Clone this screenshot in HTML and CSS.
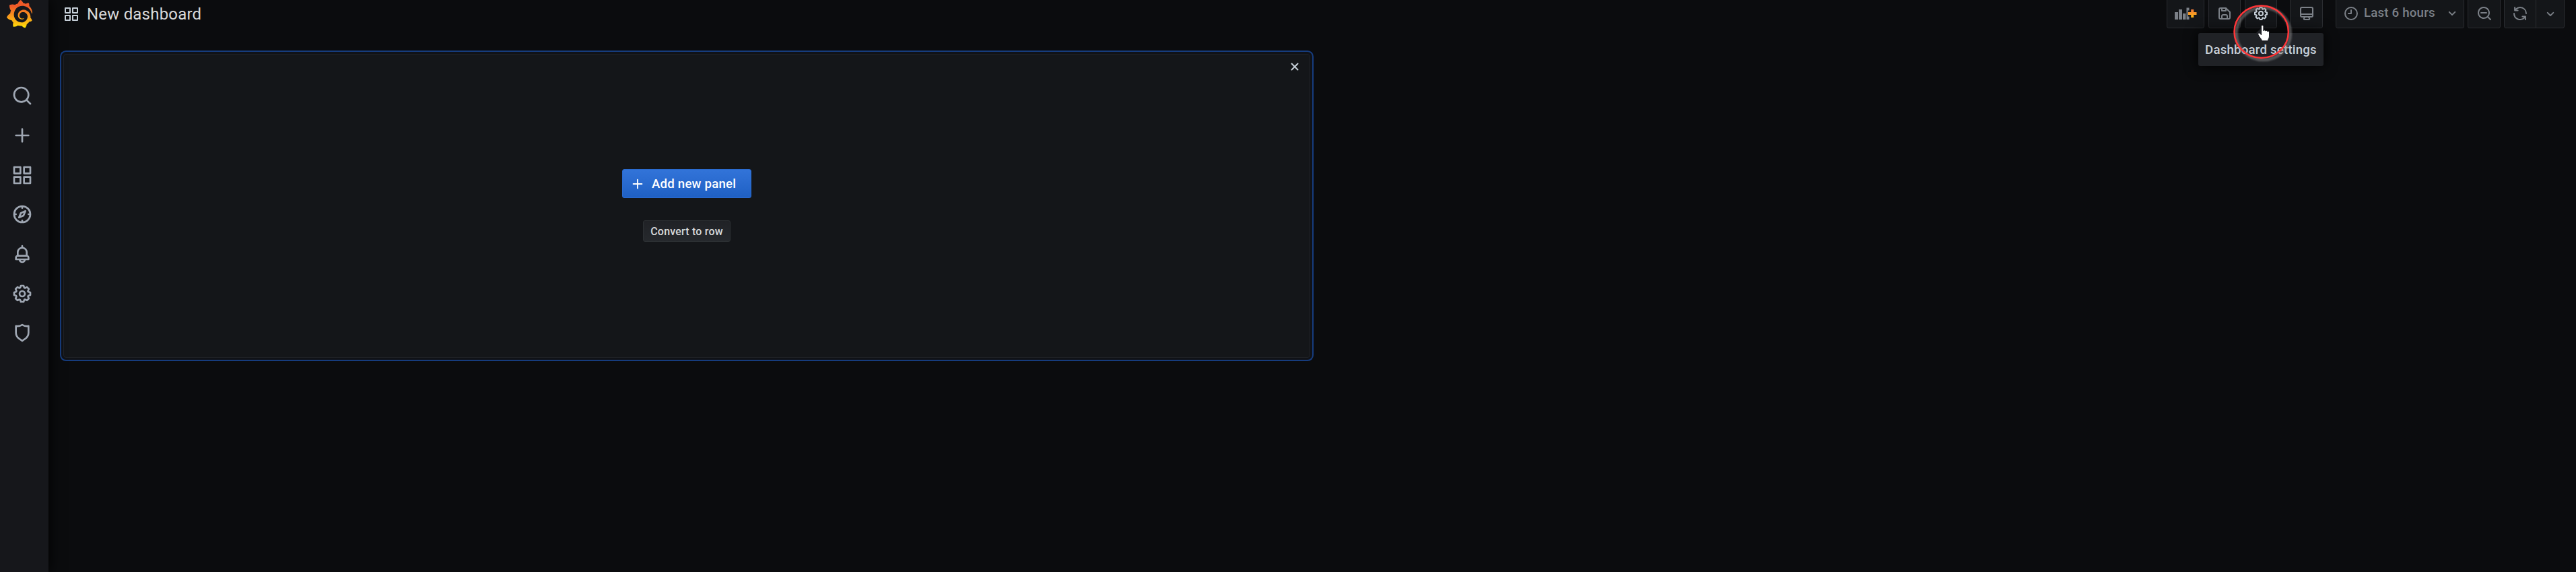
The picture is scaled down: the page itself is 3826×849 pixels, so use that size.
FILE: index.html
```
<!DOCTYPE html>
<html lang="en">
<head>
<meta charset="utf-8">
<title>New dashboard</title>
<link rel="stylesheet" href="styles.css">
</head>
<body>
<svg class="sprite" aria-hidden="true">
  <symbol id="apps" viewBox="0 0 24 24"><path d="M10,13H3a1,1,0,0,0-1,1v7a1,1,0,0,0,1,1h7a1,1,0,0,0,1-1V14A1,1,0,0,0,10,13ZM9,20H4V15H9ZM21,2H14a1,1,0,0,0-1,1v7a1,1,0,0,0,1,1h7a1,1,0,0,0,1-1V3A1,1,0,0,0,21,2ZM20,9H15V4h5Zm1,4H14a1,1,0,0,0-1,1v7a1,1,0,0,0,1,1h7a1,1,0,0,0,1-1V14A1,1,0,0,0,21,13Zm-1,7H15V15h5ZM10,2H3A1,1,0,0,0,2,3v7a1,1,0,0,0,1,1h7a1,1,0,0,0,1-1V3A1,1,0,0,0,10,2ZM9,9H4V4H9Z"/></symbol>
  <symbol id="search" viewBox="0 0 24 24"><path d="M21.71,20.29,18,16.61A9,9,0,1,0,16.61,18l3.68,3.68a1,1,0,0,0,1.42,0A1,1,0,0,0,21.71,20.29ZM11,18a7,7,0,1,1,7-7A7,7,0,0,1,11,18Z"/></symbol>
  <symbol id="search-minus" viewBox="0 0 24 24"><path d="M21.71,20.29,18,16.61A9,9,0,1,0,16.61,18l3.68,3.68a1,1,0,0,0,1.42,0A1,1,0,0,0,21.71,20.29ZM11,18a7,7,0,1,1,7-7A7,7,0,0,1,11,18ZM15,10H7a1,1,0,0,0,0,2h8a1,1,0,0,0,0-2Z"/></symbol>
  <symbol id="plus" viewBox="0 0 24 24"><path d="M19,11H13V5a1,1,0,0,0-2,0v6H5a1,1,0,0,0,0,2h6v6a1,1,0,0,0,2,0V13h6a1,1,0,0,0,0-2Z"/></symbol>
  <symbol id="compass" viewBox="0 0 24 24"><path d="M12,2A10,10,0,1,0,22,12,10,10,0,0,0,12,2Zm1,17.93V19a1,1,0,0,0-2,0v.93A8,8,0,0,1,4.070,13H5a1,1,0,0,0,0-2H4.070A8,8,0,0,1,11,4.070V5a1,1,0,0,0,2,0V4.070A8,8,0,0,1,19.930,11H19a1,1,0,0,0,0,2h.93A8,8,0,0,1,13,19.930ZM15.140,7.550l-5,2.120a1,1,0,0,0-.52.52l-2.120,5a1,1,0,0,0,.21,1.100,1,1,0,0,0,.7.29.93.93,0,0,0,.4-.08l5-2.120a1,1,0,0,0,.52-.52l2.120-5a1,1,0,0,0-1.310-1.310Zm-2.490,5.100-2.280,1,1-2.280,2.280-1Z"/></symbol>
  <symbol id="bell" viewBox="0 0 24 24"><path d="M18,13.18V10a6,6,0,0,0-5-5.910V3a1,1,0,0,0-2,0V4.090A6,6,0,0,0,6,10v3.180A3,3,0,0,0,4,16v2a1,1,0,0,0,1,1H8.140a4,4,0,0,0,7.720,0H19a1,1,0,0,0,1-1V16A3,3,0,0,0,18,13.180ZM8,10a4,4,0,0,1,8,0v3H8Zm4,10a2,2,0,0,1-1.720-1h3.440A2,2,0,0,1,12,20Zm6-3H6V16a1,1,0,0,1,1-1H17a1,1,0,0,1,1,1Z"/></symbol>
  <symbol id="cog" viewBox="0 0 24 24"><path d="M21.32,9.55l-1.89-.63.89-1.78A1,1,0,0,0,20.13,6L18,3.87a1,1,0,0,0-1.15-.19l-1.78.89-.63-1.89A1,1,0,0,0,13.5,2h-3a1,1,0,0,0-.95.68L8.92,4.57,7.14,3.68A1,1,0,0,0,6,3.87L3.87,6a1,1,0,0,0-.19,1.15l.89,1.78-1.89.63A1,1,0,0,0,2,10.5v3a1,1,0,0,0,.68.95l1.89.63-.89,1.78A1,1,0,0,0,3.87,18L6,20.13a1,1,0,0,0,1.15.19l1.78-.89.63,1.89a1,1,0,0,0,.95.68h3a1,1,0,0,0,.95-.68l.63-1.89,1.78.89A1,1,0,0,0,18,20.13L20.13,18a1,1,0,0,0,.19-1.15l-.89-1.78,1.89-.63A1,1,0,0,0,22,13.5v-3A1,1,0,0,0,21.32,9.55ZM20,12.78l-1.2.4A2,2,0,0,0,17.64,16l.57,1.14-1.1,1.1L16,17.64a2,2,0,0,0-2.79,1.16l-.4,1.2H11.22l-.4-1.2A2,2,0,0,0,8,17.64l-1.14.57-1.1-1.1L6.36,16A2,2,0,0,0,5.2,13.18L4,12.78V11.22l1.2-.4A2,2,0,0,0,6.36,8L5.79,6.89l1.1-1.1L8,6.36A2,2,0,0,0,10.82,5.2l.4-1.2h1.56l.4,1.2A2,2,0,0,0,16,6.36l1.14-.57,1.1,1.1L17.64,8a2,2,0,0,0,1.16,2.79l1.2.4ZM12,8a4,4,0,1,0,4,4A4,4,0,0,0,12,8Zm0,6a2,2,0,1,1,2-2A2,2,0,0,1,12,14Z"/></symbol>
  <symbol id="shield" viewBox="0 0 24 24"><path d="M19.63,3.65a1,1,0,0,0-.84-.2,8,8,0,0,1-6.22-1.27,1,1,0,0,0-1.14,0A8,8,0,0,1,5.21,3.45a1,1,0,0,0-.84.2A1,1,0,0,0,4,4.43v7.45a9,9,0,0,0,3.77,7.33l3.65,2.6a1,1,0,0,0,1.16,0l3.65-2.6A9,9,0,0,0,20,11.88V4.43A1,1,0,0,0,19.63,3.65ZM18,11.88a7,7,0,0,1-2.93,5.7L12,19.77,8.93,17.58A7,7,0,0,1,6,11.88V5.58a10,10,0,0,0,6-1.39,10,10,0,0,0,6,1.39Z"/></symbol>
  <symbol id="save" viewBox="0 0 24 24"><path d="M20.71,9.29l-6-6a1,1,0,0,0-.32-.21A1.09,1.09,0,0,0,14,3H6A3,3,0,0,0,3,6V18a3,3,0,0,0,3,3H18a3,3,0,0,0,3-3V10A1,1,0,0,0,20.71,9.29ZM9,5h4V7H9Zm6,14H9V16a1,1,0,0,1,1-1h4a1,1,0,0,1,1,1Zm4-1a1,1,0,0,1-1,1H17V16a3,3,0,0,0-3-3H10a3,3,0,0,0-3,3v3H6a1,1,0,0,1-1-1V6A1,1,0,0,1,6,5H7V8A1,1,0,0,0,8,9h6a1,1,0,0,0,1-1V6.41l4,4Z"/></symbol>
  <symbol id="monitor" viewBox="0 0 24 24"><path d="M19,2H5A3,3,0,0,0,2,5v10a3,3,0,0,0,3,3H7.64l-.58,1a2,2,0,0,0,0,2,2,2,0,0,0,1.75,1h6.46A2,2,0,0,0,17,21a2,2,0,0,0,0-2l-.59-1H19a3,3,0,0,0,3-3V5A3,3,0,0,0,19,2ZM8.77,20,10,18H14l1.2,2ZM20,15a1,1,0,0,1-1,1H5a1,1,0,0,1-1-1V14H20Zm0-3H4V5A1,1,0,0,1,5,4H19a1,1,0,0,1,1,1Z"/></symbol>
  <symbol id="clock" viewBox="0 0 24 24"><path d="M12,6a1,1,0,0,0-1,1v4H8a1,1,0,0,0,0,2h4a1,1,0,0,0,1-1V7A1,1,0,0,0,12,6Zm0-4A10,10,0,1,0,22,12,10,10,0,0,0,12,2Zm0,18a8,8,0,1,1,8-8A8,8,0,0,1,12,20Z"/></symbol>
  <symbol id="sync" viewBox="0 0 24 24"><path d="M19.91,15.51H15.38a1,1,0,0,0,0,2h2.4A8,8,0,0,1,4,12a1,1,0,1,0-2,0,10,10,0,0,0,16.88,7.23V21a1,1,0,0,0,2,0V16.5A1,1,0,0,0,19.91,15.51ZM12,2A10,10,0,0,0,5.12,4.77V3a1,1,0,0,0-2,0V7.5a1,1,0,0,0,1,1h4.5a1,1,0,0,0,0-2H6.22A8,8,0,0,1,20,12a1,1,0,0,0,2,0A10,10,0,0,0,12,2Z"/></symbol>
  <symbol id="angle-down" viewBox="0 0 24 24"><path d="M17,9.17a1,1,0,0,0-1.41,0L12,12.71,8.46,9.17a1,1,0,0,0-1.41,0,1,1,0,0,0,0,1.42l4.24,4.24a1,1,0,0,0,1.42,0L17,10.59A1,1,0,0,0,17,9.17Z"/></symbol>
</svg>

<div class="app">
  <nav class="sidebar">
    <svg class="logo" viewBox="0 0 351 365">
      <defs><linearGradient id="sun" x1="0" y1="1" x2="0" y2="0"><stop offset="0" stop-color="#fff200"/><stop offset=".12" stop-color="#fcc80f"/><stop offset=".45" stop-color="#f7941d"/><stop offset=".78" stop-color="#f05a28"/><stop offset="1" stop-color="#f05a28"/></linearGradient></defs>
      <path fill="url(#sun)" d="M342,161.2c-0.6-6.1-1.6-13.1-3.6-20.9c-2-7.7-5-16.2-9.4-25c-4.4-8.8-10.1-17.9-17.5-26.8c-2.9-3.5-6.1-6.9-9.5-10.2c5.1-20.3-6.2-37.9-6.2-37.9c-19.5-1.2-31.9,6.1-36.5,9.4c-0.8-0.3-1.5-0.7-2.3-1c-3.3-1.3-6.7-2.6-10.3-3.7c-3.5-1.1-7.1-2.1-10.8-3c-3.7-0.9-7.4-1.6-11.2-2.2c-0.7-0.1-1.3-0.2-2-0.3c-8.5-27.2-32.9-38.6-32.9-38.6c-27.3,17.3-32.4,41.5-32.4,41.5s-0.1,0.5-0.3,1.4c-1.5,0.4-3,0.9-4.5,1.3c-2.1,0.6-4.2,1.4-6.2,2.2c-2.1,0.8-4.1,1.6-6.2,2.5c-4.1,1.8-8.2,3.8-12.2,6c-3.9,2.2-7.7,4.6-11.4,7.1c-0.5-0.2-1-0.4-1-0.4c-37.8-14.4-71.3,2.9-71.3,2.9c-3.1,40.2,15.1,65.5,18.7,70.1c-0.9,2.5-1.7,5-2.5,7.5c-2.8,9.1-4.9,18.4-6.2,28.1c-0.2,1.4-0.4,2.8-0.5,4.2C18.8,192.7,8.5,228,8.5,228c29.1,33.5,63.1,35.6,63.1,35.6c0,0,0.1-0.1,0.1-0.1c4.3,7.7,9.3,15,14.9,21.9c2.4,2.9,4.8,5.6,7.4,8.3c-10.6,30.4,1.5,55.6,1.5,55.6c32.4,1.2,53.7-14.2,58.2-17.7c3.2,1.1,6.5,2.1,9.8,2.9c10,2.6,20.2,4.1,30.4,4.5c2.5,0.1,5.1,0.2,7.6,0.1l1.2,0l0.8,0l1.6,0l1.6-0.1l0,0.1c15.3,21.8,42.1,24.9,42.1,24.9c19.1-20.1,20.2-40.1,20.2-44.4l0,0c0,0,0-0.1,0-0.3c0-0.4,0-0.6,0-0.6l0,0c0-0.3,0-0.6,0-0.9c4-2.8,7.8-5.8,11.4-9.1c7.6-6.9,14.3-14.8,19.9-23.3c0.5-0.8,1-1.6,1.5-2.4c21.6,1.2,36.9-13.4,36.9-13.4c-3.6-22.5-16.4-33.5-19.1-35.6l0,0c0,0-0.1-0.1-0.3-0.2c-0.2-0.1-0.2-0.2-0.2-0.2c0,0,0,0,0,0c-0.1-0.1-0.3-0.2-0.5-0.3c0.1-1.4,0.2-2.7,0.3-4.1c0.2-2.4,0.2-4.9,0.2-7.3l0-1.8l0-0.9l0-0.5c0-0.6,0-0.4,0-0.6l-0.1-1.5l-0.1-2c0-0.7-0.1-1.3-0.2-1.9c-0.1-0.6-0.1-1.3-0.2-1.9l-0.2-1.9l-0.3-1.9c-0.4-2.5-0.8-4.9-1.4-7.4c-2.3-9.7-6.1-18.9-11-27.2c-5-8.3-11.2-15.6-18.3-21.8c-7-6.2-14.9-11.2-23.1-14.9c-8.3-3.7-16.9-6.1-25.5-7.2c-4.3-0.6-8.6-0.8-12.9-0.7l-1.6,0l-0.4,0c-0.1,0-0.6,0-0.5,0l-0.7,0l-1.6,0.1c-0.6,0-1.2,0.1-1.7,0.1c-2.2,0.2-4.4,0.5-6.5,0.9c-8.6,1.6-16.7,4.7-23.8,9c-7.1,4.3-13.3,9.6-18.3,15.6c-5,6-8.9,12.7-11.6,19.6c-2.7,6.9-4.2,14.1-4.6,21c-0.1,1.7-0.1,3.5-0.1,5.2c0,0.4,0,0.9,0,1.3l0.1,1.4c0.1,0.8,0.1,1.7,0.2,2.5c0.3,3.5,1,6.9,1.9,10.1c1.9,6.5,4.9,12.4,8.6,17.4c3.7,5,8.2,9.1,12.9,12.4c4.7,3.2,9.8,5.5,14.8,7c5,1.5,10,2.1,14.7,2.1c0.6,0,1.2,0,1.7,0c0.3,0,0.6,0,0.9,0c0.3,0,0.6,0,0.9-0.1c0.5,0,1-0.1,1.5-0.1c0.1,0,0.3,0,0.4-0.1l0.5-0.1c0.3,0,0.6-0.1,0.9-0.1c0.6-0.1,1.1-0.2,1.7-0.3c0.6-0.1,1.1-0.2,1.6-0.4c1.1-0.2,2.1-0.6,3.1-0.9c2-0.7,4-1.5,5.7-2.4c1.8-0.9,3.4-2,5-3c0.4-0.3,0.9-0.6,1.3-1c1.6-1.3,1.9-3.7,0.6-5.3c-1.1-1.4-3.1-1.8-4.7-0.9c-0.4,0.2-0.8,0.4-1.2,0.6c-1.4,0.7-2.8,1.3-4.3,1.8c-1.5,0.5-3.1,0.9-4.7,1.2c-0.8,0.1-1.6,0.2-2.5,0.3c-0.4,0-0.8,0.1-1.3,0.1c-0.4,0-0.9,0-1.2,0c-0.4,0-0.8,0-1.2,0c-0.5,0-1,0-1.5-0.1c-0.5,0-0.9-0.1-1.3-0.1c-0.5-0.1-0.9-0.1-1.4-0.2c-3.7-0.5-7.4-1.6-10.9-3.2c-3.6-1.6-7-3.8-10.1-6.6c-3.1-2.8-5.8-6.1-7.9-9.9c-2.1-3.8-3.6-8-4.3-12.4c-0.3-2.2-0.5-4.5-0.4-6.7c0-0.6,0.1-1.2,0.1-1.8l0-0.8c0-0.3,0.1-0.6,0.1-0.9c0.1-1.2,0.3-2.4,0.5-3.6c1.7-9.6,6.5-19,13.9-26.1c1.9-1.8,3.9-3.4,6-4.9c2.1-1.5,4.4-2.8,6.8-3.9c2.4-1.1,4.8-2,7.4-2.7c2.5-0.7,5.1-1.1,7.8-1.4c1.3-0.1,2.6-0.2,4-0.2l2.7,0l1.5,0.1c2.9,0.2,5.7,0.6,8.5,1.3c5.6,1.2,11.1,3.3,16.2,6.1c10.2,5.7,18.9,14.5,24.2,25.1c2.7,5.3,4.6,11,5.5,16.9c0.2,1.5,0.4,3,0.5,4.5l0.2,2.2l0,4.3c0,0.7-0.1,1.9-0.1,2.6c-0.1,1.6-0.3,3.3-0.5,4.9c-0.2,1.6-0.5,3.2-0.8,4.8c-0.3,1.6-0.7,3.2-1.1,4.7c-0.8,3.1-1.8,6.2-3,9.3c-2.4,6-5.6,11.8-9.4,17.1c-7.7,10.6-18.2,19.2-30.2,24.7c-6,2.7-12.3,4.7-18.8,5.7c-3.2,0.6-6.5,0.9-9.8,1l-4.9,0c-1.8,0-3.5-0.1-5.3-0.3c-7-0.5-13.9-1.8-20.7-3.7c-6.7-1.9-13.2-4.6-19.4-7.8c-12.3-6.6-23.4-15.6-32-26.5c-4.3-5.4-8.1-11.3-11.2-17.4c-3.1-6.1-5.6-12.6-7.4-19.1c-1.8-6.6-2.9-13.3-3.4-20.1l-0.1-1.3l0-5.7c0-0.8,0-1.7,0-2.5c0.1-3.3,0.4-6.8,0.8-10.2c0.4-3.4,1-6.9,1.7-10.3c0.7-3.4,1.5-6.8,2.5-10.2c1.9-6.7,4.3-13.2,7.1-19.3c5.7-12.2,13.1-23.1,22-31.8c2.2-2.2,4.5-4.2,6.9-6.2c2.4-1.9,4.9-3.7,7.5-5.4c2.5-1.7,5.2-3.2,7.9-4.6c1.3-0.7,2.7-1.4,4.1-2c1.4-0.6,2.8-1.2,4.2-1.8c2.8-1.2,5.7-2.2,8.7-3.1c1.4-0.5,2.9-0.9,4.4-1.3c1.5-0.4,3-0.8,4.5-1.1c1.5-0.4,3-0.7,4.6-1c1.5-0.3,3-0.5,4.6-0.8c2-0.3,3.4-0.4,4.9-0.6c2-0.2,3.6-0.4,5.3-0.5c2-0.2,3.6-0.3,4.8-0.3c2.9-0.2,6.9-0.2,9.8-0.1c5.8,0.2,11.5,0.9,17,1.9c11.1,2.1,21.5,5.6,31,10.3c9.5,4.6,17.9,10.3,25.3,16.5c2.8,2.4,4.5,4,5.3,4.8c1.7,1.6,3.3,3.2,4.9,4.9c3.1,3.3,6,6.6,8.6,10c5.2,6.7,9.4,13.5,12.7,19.9c0.8,1.6,1.6,3.2,2.3,4.8c0.8,1.6,1.5,3.1,2.1,4.6c1.2,3,2.4,5.9,3.3,8.6c1.5,4.4,2.6,8.3,3.5,11.7c0.3,1.4,1.6,2.3,3,2.1c1.5-0.1,2.6-1.3,2.6-2.8C342.6,170.4,342.5,166.1,342,161.2z"/>
    </svg>
    <div class="menu">
      <a class="menu-item"><svg><use href="#search"/></svg></a>
      <a class="menu-item"><svg><use href="#plus"/></svg></a>
      <a class="menu-item"><svg><use href="#apps"/></svg></a>
      <a class="menu-item"><svg><use href="#compass"/></svg></a>
      <a class="menu-item"><svg><use href="#bell"/></svg></a>
      <a class="menu-item"><svg><use href="#cog"/></svg></a>
      <a class="menu-item"><svg><use href="#shield"/></svg></a>
    </div>
  </nav>

  <main class="main">
    <header class="navbar">
      <div class="title"><svg class="icon"><use href="#apps"/></svg><span>New dashboard</span></div>
      <div class="tools">
        <button class="tool add-panel">
          <svg class="bars" viewBox="0 0 34 24">
            <defs><linearGradient id="plusfill" x1="0" y1="0" x2="0" y2="1"><stop offset="0" stop-color="#f2793b"/><stop offset="1" stop-color="#fcb612"/></linearGradient></defs>
            <path fill="#7b8087" d="M1 10h5v11H1zM7 6h5v15H7zM13 12h4.500v9H13zM18.500 3.500h4v4h-2v9h2v4.500h-4z"/>
            <path fill="url(#plusfill)" d="M25.200 6h4v4h4.300v4h-4.300v4h-4v-4H21v-4h4.200z"/>
          </svg>
        </button>
        <button class="tool save"><svg class="icon"><use href="#save"/></svg></button>
        <div class="settings">
          <button class="tool active"><svg class="icon"><use href="#cog"/></svg></button>
          <div class="tooltip">Dashboard settings</div>
          <svg class="pointer" viewBox="0 0 96 96">
            <defs><filter id="soft" x="-20%" y="-20%" width="140%" height="140%"><feGaussianBlur stdDeviation="1.300"/></filter></defs>
            <ellipse cx="50.500" cy="50" rx="40.200" ry="38.700" fill="none" stroke="#8a8a8a" stroke-opacity=".5" stroke-width="5" filter="url(#soft)"/>
            <ellipse cx="47.700" cy="47.200" rx="40.200" ry="38.700" fill="none" stroke="#ff3538" stroke-width="2.500"/>
            <path fill="#fff" stroke="#15161c" stroke-width="1" d="M47.500 39.200c0-2.200 3.400-2.200 3.400 0v6.600c.5-1.500 2.900-1.300 3 .3.700-1.200 2.700-.8 2.800.6.800-1 2.800-.5 2.800 1.200v5.800c0 3.300-2 4.200-2 7h-9c-.3-2.700-3.600-4.900-5.500-9.300-1-2.400 1.400-3.200 2.800-1.500l1.700 1.900z"/>
          </svg>
        </div>
        <button class="tool monitor"><svg class="icon"><use href="#monitor"/></svg></button>
        <button class="tool time"><svg class="icon"><use href="#clock"/></svg><span>Last 6 hours</span><svg class="icon"><use href="#angle-down"/></svg></button>
        <button class="tool zoom"><svg class="icon"><use href="#search-minus"/></svg></button>
        <div class="refresh">
          <button class="tool sync"><svg class="icon"><use href="#sync"/></svg></button>
          <button class="tool interval"><svg class="icon"><use href="#angle-down"/></svg></button>
        </div>
      </div>
    </header>

    <section class="panel">
      <div class="panel-head"><svg class="close" viewBox="0 0 12 12"><path d="M1.500 1.500l9 9M10.500 1.500l-9 9"/></svg></div>
      <div class="panel-body">
        <button class="primary"><svg><use href="#plus"/></svg><span>Add new panel</span></button>
        <button class="secondary">Convert to row</button>
      </div>
    </section>
  </main>
</div>
</body>
</html>
```
FILE: styles.css
```
* { box-sizing: border-box; }

html, body { height: 100%; }

body {
  margin: 0;
  overflow: hidden;
  background: #0b0c0e;
  color: #c7d0d9;
  font-family: Roboto, "Liberation Sans", sans-serif;
  font-size: 18.67px;
  letter-spacing: .0107em;
}

button {
  margin: 0;
  padding: 0;
  font: inherit;
  letter-spacing: inherit;
  color: inherit;
}

svg { display: block; flex: none; fill: currentColor; }

.sprite { display: none; }
.icon { width: 24px; height: 24px; }

.app { display: flex; height: 849px; }

.sidebar {
  position: relative;
  flex: none;
  width: 72px;
  background: #16171b;
  box-shadow: 0 0 20px #000;
}

.logo { width: 40px; height: 41.500px; margin-left: 9px; }

.menu { padding-top: 71.500px; }

.menu-item {
  display: flex;
  align-items: center;
  height: 58.670px;
  padding-left: 17px;
  color: #9fa7b3;
}

.menu-item svg { width: 32px; height: 32px; }

.main { flex: 1; min-width: 0; }

.navbar {
  display: flex;
  justify-content: space-between;
  height: 80px;
  padding: 0 17px 0 22px;
}

.title {
  display: flex;
  align-items: center;
  gap: 11px;
  height: 42px;
  font-size: 24px;
  color: #d8d9da;
}

.title .icon { color: #c7d0d9; }

.tools { display: flex; margin-top: -6px; }

.tool {
  display: flex;
  align-items: center;
  justify-content: center;
  width: 48px;
  height: 48px;
  padding-top: 4px;
  border: 1px solid #2a2c30;
  border-radius: 3px;
  background: #141619;
  color: #7b8087;
}

.add-panel { width: 56px; margin-right: 6px; }
.bars { width: 34px; height: 24px; }
.save { margin-right: 6px; }
.settings { position: relative; margin-right: 19px; }
.active { color: #c7d0d9; }
.monitor { width: 49px; margin-right: 19px; }

.time {
  justify-content: flex-start;
  width: 191px;
  margin-right: 5px;
  padding-left: 10px;
  font-weight: 500;
}

.time span { margin: -2px 13px 0 7px; white-space: nowrap; }
.zoom { width: 49px; margin-right: 5px; }
.refresh { display: flex; }
.sync { border-radius: 3px 0 0 3px; }
.interval { width: 43px; margin-left: -1px; padding-top: 6px; border-radius: 0 3px 3px 0; }

.tooltip {
  position: absolute;
  top: 55px;
  left: -69px;
  width: 186px;
  height: 49px;
  border-radius: 3px;
  background: #202226;
  box-shadow: 0 0 20px #000;
  font-weight: 500;
  line-height: 51px;
  text-align: center;
  white-space: nowrap;
}

.tooltip::before {
  content: "";
  position: absolute;
  top: -7px;
  left: 86px;
  border: 7px solid transparent;
  border-top: 0;
  border-bottom-color: #202226;
}

.pointer {
  position: absolute;
  top: 6px;
  left: -23px;
  width: 96px;
  height: 96px;
  fill: none;
}

.panel {
  width: 1852px;
  height: 451px;
  margin-left: 22px;
  border: 1px solid #202226;
  border-radius: 4px;
  background: #141619;
  box-shadow: 0 0 0 3px #101217, 0 0 0 5px #163c7d;
}

.panel-head {
  display: flex;
  justify-content: flex-end;
  height: 44px;
  padding: 12px 16px 0 0;
}

.close {
  width: 12px;
  height: 12px;
  fill: none;
  stroke: #c7d0d9;
  stroke-width: 2;
  stroke-linecap: round;
}

.panel-body {
  display: flex;
  flex-direction: column;
  align-items: center;
  gap: 33px;
  padding-top: 126px;
}

.primary {
  display: flex;
  align-items: center;
  width: 192px;
  height: 43px;
  padding-left: 11px;
  border: 1px solid #2a6bd0;
  border-radius: 3px;
  background: linear-gradient(#3274d9, #1f60c4);
  color: #fff;
  font-weight: 500;
}

.primary svg { width: 22px; height: 22px; margin-right: 10px; }

.secondary {
  width: 130px;
  height: 32px;
  border: 1px solid #2c3033;
  border-radius: 3px;
  background: linear-gradient(#202226, #26292d);
  color: #d8d9da;
  font-size: 16px;
  font-weight: 500;
}
```
